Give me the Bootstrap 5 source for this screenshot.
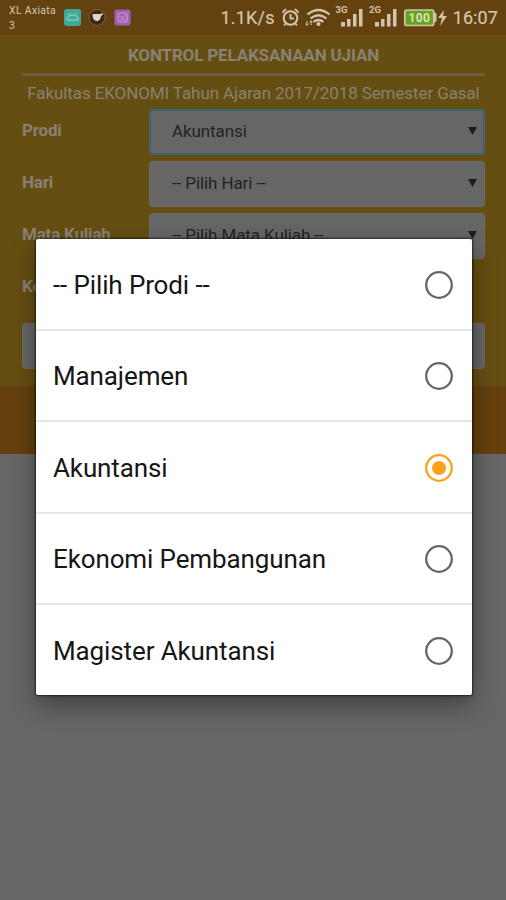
<!DOCTYPE html>
<html lang="id">
<head>
<meta charset="utf-8">
<meta name="viewport" content="width=device-width, initial-scale=1">
<title>Kontrol Pelaksanaan Ujian</title>
<link href="https://cdn.jsdelivr.net/npm/bootstrap@5.3.0/dist/css/bootstrap.min.css" rel="stylesheet">
<style>
body{font-family:Roboto,"Liberation Sans",sans-serif;background:#666;height:900px;overflow:hidden;color:#8a8172}
.status{height:35px;background:#64420f;color:#d3c4ae;padding:0 8px 0 9px}
.carrier{font-size:10.5px;line-height:15px;width:55px;height:30px;padding-top:3px;letter-spacing:.3px;white-space:nowrap}
.rate{font-size:18px;line-height:36px;letter-spacing:.2px;-webkit-text-stroke:.2px #d3c4ae}
.clock{letter-spacing:.1px}
.status svg{display:block;flex:none}
.form-zone{height:351px;background:#654e12;padding:9px 21px 0 22px}
.title{font-size:17px;line-height:23px;font-weight:700;letter-spacing:-.16px;height:29px}
.rule{height:3px;background:#6e5d3c}
.sub{font-size:17px;line-height:24px;margin-top:5px;height:28px;letter-spacing:-.1px;white-space:nowrap}
.field{height:52px}
.field label{width:127px;font-size:17px;font-weight:700;line-height:42px;letter-spacing:-.2px;white-space:nowrap}
.pick{height:46px;background:#666;border:1px solid #6f6c67;border-radius:4px;color:#232323;font-size:17px;letter-spacing:-.1px;padding:0 7px 0 22px}
.pick.active{border:2px solid #3f6476;padding:0 6px 0 21px}
.pick .arrow{width:9px;height:8px;margin-top:-3px}
.last{margin-top:6px}
.foot{height:68px;background:#64400e}
.layer{padding:239px 34px 0 36px}
.choices{--bs-list-group-border-radius:2px;box-shadow:0 0 2px 1px rgba(0,0,0,.6),0 10px 24px rgba(0,0,0,.38)}
.choices .list-group-item{height:91.4px;padding:1px 18px 0 17px;border:0;border-bottom:2px solid #e6e6e6;color:#161616;font-size:26px;line-height:32px;letter-spacing:-.12px}
.choices .list-group-item:first-child{height:92px;padding-top:2px}
.choices .list-group-item:last-child{border-bottom:0;height:90px}
.ring{width:30px;height:30px}
</style>
</head>
<body class="position-relative">
<header class="status d-flex">
  <div class="carrier">XL Axiata<br>3</div>
  <svg width="68" height="35" viewBox="0 0 68 35">
    <rect x="0" y="9" width="17" height="17" rx="3" fill="#40aa98"/><path d="M3 20c0-3 2-5 5.500-5s5.500 2 5.500 5zM4.500 13l2 3m6-3l-2 3" fill="none" stroke="#83c9b8" stroke-width="1.300"/>
    <circle cx="33" cy="17.500" r="8" fill="#3d2915" stroke="#80613c"/><path d="M28.500 14h8l2-1 .5 1.500-2 1.500q-.5 5-4.300 5-4.200 0-4.200-7z" fill="#e1d5c6"/>
    <rect x="50.500" y="9.500" width="16" height="16" rx="2.500" fill="#a060ad"/><rect x="54" y="13" width="9" height="9" rx="2" fill="none" stroke="#c999ce" stroke-width="1.200"/><path d="M55 16l3 2 4-3m-6 6l2-2 4 1" fill="none" stroke="#c999ce"/>
  </svg>
  <div class="rate ms-auto">1.1K/s</div>
  <svg class="ms-1" width="174" height="35" viewBox="278 0 174 35" fill="none" stroke="#d3c4ae">
    <circle cx="289.500" cy="18" r="6.800" stroke-width="2.100"/><path d="M281.700 12.800q1-2.500 3.600-3.600m8.400 0q2.600 1.100 3.600 3.600M289.500 14v4.500h3.500M284.700 23.500l-1.500 2m11.100-2l1.500 2" stroke-width="1.900"/>
    <path d="M306.500 14.500q11-9 22 0M309.500 18.500q8-6.500 16 0M312.500 22q5-4 10 0" stroke-width="2.200"/><circle cx="317.500" cy="24" r="2" fill="#d3c4ae" stroke="none"/><path d="M306 21v4m-1.500-1.500l1.500 2 1.500-2M310 25v-4m-1.200 1.300l1.200-1.600 1.200 1.600" stroke-width="1"/>
    <g fill="#d3c4ae" stroke="none"><rect x="340" y="22" width="4" height="4.500"/><rect x="346" y="19" width="3.500" height="7.500"/><rect x="352" y="14" width="3.500" height="12.500"/><rect x="358" y="9" width="3.500" height="17.500"/><rect x="374" y="22" width="4" height="4.500"/><rect x="380" y="19" width="3.500" height="7.500"/><rect x="386" y="14" width="3.500" height="12.500"/><rect x="392" y="9" width="3.500" height="17.500"/>
    <text x="334.500" y="13" font-size="9.500" font-weight="700" textLength="12">3G</text><text x="368" y="13" font-size="9.500" font-weight="700" textLength="12">2G</text>
    <path d="M443 10l-6 8h4l-2 8 7-10h-4z"/><rect x="433" y="13" width="2.500" height="9" rx="1"/></g>
    <rect x="403.800" y="10" width="29" height="15.500" rx="2" fill="#64a51b" stroke-width="1.700"/><text x="407.500" y="22" font-size="12" font-weight="700" fill="#e0dec5" stroke="none" textLength="21.500">100</text>
  </svg>
  <div class="rate clock">16:07</div>
</header>
<main class="form-zone">
  <h1 class="title text-center m-0">KONTROL PELAKSANAAN UJIAN</h1>
  <div class="rule"></div>
  <div class="sub text-center">Fakultas EKONOMI Tahun Ajaran 2017/2018 Semester Gasal</div>
  <div class="field d-flex"><label>Prodi</label><div class="pick active flex-fill d-flex align-items-center justify-content-between"><span>Akuntansi</span><svg class="arrow" viewBox="0 0 9 8"><path d="M0 0h9L4.500 8z" fill="#1c1c1c"/></svg></div></div>
  <div class="field d-flex"><label>Hari</label><div class="pick flex-fill d-flex align-items-center justify-content-between"><span>-- Pilih Hari --</span><svg class="arrow" viewBox="0 0 9 8"><path d="M0 0h9L4.500 8z" fill="#1c1c1c"/></svg></div></div>
  <div class="field d-flex"><label>Mata Kuliah</label><div class="pick flex-fill d-flex align-items-center justify-content-between"><span>-- Pilih Mata Kuliah --</span><svg class="arrow" viewBox="0 0 9 8"><path d="M0 0h9L4.500 8z" fill="#1c1c1c"/></svg></div></div>
  <div class="field d-flex"><label>Kelas</label></div>
  <div class="pick last"></div>
</main>
<div class="foot"></div>
<div class="layer position-absolute top-0 start-0 w-100">
  <ul class="list-group choices">
    <li class="list-group-item d-flex align-items-center justify-content-between"><span>-- Pilih Prodi --</span><svg class="ring" viewBox="0 0 30 30"><circle cx="15" cy="15" r="12.800" fill="none" stroke="#666" stroke-width="2.300"/></svg></li>
    <li class="list-group-item d-flex align-items-center justify-content-between"><span>Manajemen</span><svg class="ring" viewBox="0 0 30 30"><circle cx="15" cy="15" r="12.800" fill="none" stroke="#666" stroke-width="2.300"/></svg></li>
    <li class="list-group-item d-flex align-items-center justify-content-between"><span>Akuntansi</span><svg class="ring" viewBox="0 0 30 30"><circle cx="15" cy="15" r="12.800" fill="none" stroke="#faa21b" stroke-width="2.300"/><circle cx="15" cy="15" r="7" fill="#faa21b"/></svg></li>
    <li class="list-group-item d-flex align-items-center justify-content-between"><span>Ekonomi Pembangunan</span><svg class="ring" viewBox="0 0 30 30"><circle cx="15" cy="15" r="12.800" fill="none" stroke="#666" stroke-width="2.300"/></svg></li>
    <li class="list-group-item d-flex align-items-center justify-content-between"><span>Magister Akuntansi</span><svg class="ring" viewBox="0 0 30 30"><circle cx="15" cy="15" r="12.800" fill="none" stroke="#666" stroke-width="2.300"/></svg></li>
  </ul>
</div>
<script src="https://cdn.jsdelivr.net/npm/bootstrap@5.3.0/dist/js/bootstrap.bundle.min.js"></script>
</body>
</html>
